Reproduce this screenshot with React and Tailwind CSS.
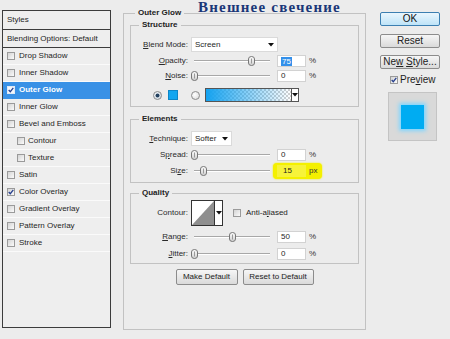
import React from 'react';

const sans = "font-['Liberation_Sans',Arial,sans-serif]";

const items = [
    { label: 'Drop Shadow' },
    { label: 'Inner Shadow' },
    { label: 'Outer Glow', checked: true, selected: true },
    { label: 'Inner Glow' },
    { label: 'Bevel and Emboss' },
    { label: 'Contour', indent: true },
    { label: 'Texture', indent: true },
    { label: 'Satin' },
    { label: 'Color Overlay', checked: true },
    { label: 'Gradient Overlay' },
    { label: 'Pattern Overlay' },
    { label: 'Stroke' },
];

const Check = ({ checked, light }) => (
    <span
        className={`w-[8px] h-[8px] shrink-0 border flex items-center justify-center ${
            light ? 'border-[#dfe9f5] bg-[#f4f7fb]' : 'border-[#9a9a9a] bg-linear-to-br from-[#d4d4d4] to-[#fbfbfb]'
        }`}
    >
        {checked && (
            <svg width="6" height="6" viewBox="0 0 6 6">
                <path d="M0.7 3 L2.3 4.7 L5.3 0.9" fill="none" stroke="#263f8e" strokeWidth="1.3" />
            </svg>
        )}
    </span>
);

const Arrow = () => (
    <svg width="6" height="4" viewBox="0 0 6 4">
        <path d="M0 0 H6 L3 3.5 Z" fill="#111" />
    </svg>
);

const Slider = ({ pos }) => (
    <div className="relative w-[82px] h-[12px] flex items-center px-[3px] shrink-0">
        <div className="w-full h-[2px] border-t border-[#a8a8a8] border-b border-b-white" />
        <svg className="absolute top-[1px]" style={{ left: `${pos}px` }} width="7" height="10" viewBox="0 0 7 10">
            <defs>
                <linearGradient id="th" x1="0" y1="0" x2="0" y2="1">
                    <stop offset="0" stopColor="#ffffff" />
                    <stop offset="1" stopColor="#cfcfcf" />
                </linearGradient>
            </defs>
            <path d="M0.5 3 Q0.5 0.5 3.5 0.5 Q6.5 0.5 6.5 3 V7 Q6.5 9.5 3.5 9.5 Q0.5 9.5 0.5 7 Z" fill="url(#th)" stroke="#777" />
            <line x1="3.5" y1="2.5" x2="3.5" y2="7.5" stroke="#9a9a9a" />
        </svg>
    </div>
);

const Label = ({ children }) => (
    <span className="w-[60px] pr-[3px] text-right shrink-0 text-[#2a2a2a]">{children}</span>
);

const Field = ({ value, selected }) => (
    <span className="w-[29px] h-[12px] bg-white border border-[#d2d2d2] flex items-center pl-[3px] shrink-0">
        {selected ? <span className="bg-[#3390ea] text-white px-[1px] leading-[9px]">{value}</span> : value}
    </span>
);

const SliderRow = ({ label, pos, value, unit = '%', selected, className = '' }) => (
    <div className={`flex items-center h-[12px] ${className}`}>
        <Label>{label}</Label>
        <Slider pos={pos} />
        <span className="ml-[4px]">
            <Field value={value} selected={selected} />
        </span>
        <span className="ml-[3px] text-[#333]">{unit}</span>
    </div>
);

const Radio = ({ on }) => (
    <svg width="9" height="9" viewBox="0 0 9 9" className="shrink-0">
        <defs>
            <radialGradient id={on ? 'ron' : 'roff'} cx="0.4" cy="0.4" r="0.7">
                <stop offset="0" stopColor="#ffffff" />
                <stop offset="1" stopColor={on ? '#c7d3df' : '#dadada'} />
            </radialGradient>
        </defs>
        <circle cx="4.5" cy="4.5" r="4" fill={`url(#${on ? 'ron' : 'roff'})`} stroke="#8c8c8c" />
        {on && <circle cx="4.5" cy="4.5" r="2" fill="#23415f" />}
    </svg>
);

const Group = ({ title, className = '', legendClass = 'ml-[8px]', children }) => (
    <fieldset className={`border border-[#c2c2c2] ${className}`}>
        <legend className={`${legendClass} px-[3px] font-bold text-[8px] leading-[12px] text-[#222]`}>{title}</legend>
        {children}
    </fieldset>
);

const Btn = ({ children, className = '' }) => (
    <div
        className={`flex items-center justify-center border border-[#8c8c8c] rounded-[2px] bg-linear-to-b from-[#f6f6f6] to-[#dadada] text-[#222] ${className}`}
    >
        {children}
    </div>
);

export default function App() {
    return (
        <div className={`relative w-[450px] h-[339px] bg-[#ececec] flex items-start text-[8px] leading-none text-[#1e1e1e] ${sans}`}>
            {/* style list */}
            <div className="ml-[2px] mt-[10px] w-[109px] h-[318px] border border-[#3c3c3c] bg-[#eeeeee] flex flex-col">
                <div className="h-[19px] border-b border-[#3c3c3c] flex items-center pl-[4px]">Styles</div>
                <div className="h-[18px] border-b border-[#3c3c3c] flex items-center pl-[4px]">Blending Options: Default</div>
                {items.map((it) => (
                    <div
                        key={it.label}
                        className={`h-[17px] flex items-center border-b ${it.indent ? 'pl-[14px]' : 'pl-[4px]'} ${
                            it.selected ? 'bg-[#3991e6] border-[#3991e6] text-white font-bold' : 'border-[#fafafa]'
                        }`}
                    >
                        <Check checked={it.checked} light={it.selected} />
                        <span className={it.indent ? 'ml-[3px]' : 'ml-[4px]'}>{it.label}</span>
                    </div>
                ))}
            </div>

            {/* Outer Glow settings */}
            <fieldset className="ml-[12px] mt-[7px] w-[243px] h-[323px] border border-[#c2c2c2] px-[6px]">
                <legend className="ml-[5px] px-[3px] font-bold text-[8px] leading-[12px] text-[#222]">Outer Glow</legend>

                <Group title="Structure" className="h-[88px]">
                    <div className="flex items-center h-[15px] mt-[6px]">
                        <Label>
                            <u>B</u>lend Mode:
                        </Label>
                        <div className="w-[87px] h-[15px] bg-white border border-[#dadada] flex items-center justify-between pl-[3px] pr-[3px]">
                            <span>Screen</span>
                            <Arrow />
                        </div>
                    </div>
                    <SliderRow
                        className="mt-[3px]"
                        label={
                            <>
                                <u>O</u>pacity:
                            </>
                        }
                        pos={57}
                        value="75"
                        selected
                    />
                    <SliderRow
                        className="mt-[3px]"
                        label={
                            <>
                                <u>N</u>oise:
                            </>
                        }
                        pos={0}
                        value="0"
                    />
                    <div className="flex items-center h-[14px] mt-[6px] pl-[22px]">
                        <Radio on />
                        <span className="ml-[6px] w-[10px] h-[10px] bg-[#12a6f0] border border-[#0c86c8]" />
                        <span className="ml-[13px]">
                            <Radio />
                        </span>
                        <div className="ml-[5px] w-[94px] h-[14px] border border-[#555] flex">
                            <div className="flex-1 bg-[repeating-conic-gradient(#d0d0d0_0%_25%,#ffffff_0%_50%)] bg-[length:4px_4px]">
                                <div className="w-full h-full bg-linear-to-r from-[#14a2f0] to-transparent" />
                            </div>
                            <div className="w-[7px] bg-white border-l border-[#555] flex items-center justify-center">
                                <Arrow />
                            </div>
                        </div>
                    </div>
                </Group>

                <Group title="Elements" className="mt-[6px] h-[70px]">
                    <div className="flex items-center h-[15px] mt-[6px]">
                        <Label>
                            <u>T</u>echnique:
                        </Label>
                        <div className="w-[41px] h-[15px] bg-white border border-[#dadada] flex items-center justify-between pl-[3px] pr-[3px]">
                            <span>Softer</span>
                            <Arrow />
                        </div>
                    </div>
                    <SliderRow
                        className="mt-[3px]"
                        label={
                            <>
                                S<u>p</u>read:
                            </>
                        }
                        pos={0}
                        value="0"
                    />
                    <div className="flex items-center mt-[2px]">
                        <Label>
                            Si<u>z</u>e:
                        </Label>
                        <Slider pos={9} />
                        <div className="w-[49px] h-[16px] rounded-[4px] bg-[#f4f000] shadow-[0_0_2px_#f4f000] flex items-center pl-[4px]">
                            <span className="w-[29px] h-[12px] bg-[#f7f33a] flex items-center pl-[6px]">15</span>
                            <span className="ml-[3px] text-[#333]">px</span>
                        </div>
                    </div>
                </Group>

                <Group title="Quality" className="mt-[4px] h-[77px]">
                    <div className="flex items-center mt-[1px]">
                        <Label>Contour:</Label>
                        <div className="w-[32px] h-[26px] border border-[#333] flex bg-white">
                            <svg width="22" height="24" viewBox="0 0 22 24" className="shrink-0">
                                <path d="M0 24 L22 0 V24 Z" fill="#8f8f8f" />
                            </svg>
                            <div className="flex-1 border-l border-[#333] flex items-center justify-center">
                                <Arrow />
                            </div>
                        </div>
                        <span className="ml-[10px]">
                            <Check />
                        </span>
                        <span className="ml-[5px]">
                            Anti-a<u>l</u>iased
                        </span>
                    </div>
                    <SliderRow
                        className="mt-[5px]"
                        label={
                            <>
                                <u>R</u>ange:
                            </>
                        }
                        pos={38}
                        value="50"
                    />
                    <SliderRow
                        className="mt-[5px]"
                        label={
                            <>
                                <u>J</u>itter:
                            </>
                        }
                        pos={0}
                        value="0"
                    />
                </Group>

                <div className="flex justify-center gap-[5px] mt-[5px]">
                    <Btn className="w-[62px] h-[16px]">Make Default</Btn>
                    <Btn className="w-[71px] h-[16px]">Reset to Default</Btn>
                </div>
            </fieldset>

            {/* buttons & preview */}
            <div className="ml-[14px] mt-[12px] w-[60px] flex flex-col text-[10px]">
                <div className="h-[14px] flex items-center justify-center border border-[#3c7fb1] rounded-[2px] bg-linear-to-b from-[#eaf6fd] to-[#bee4f8] text-[#111]">
                    OK
                </div>
                <Btn className="h-[14px] mt-[8px]">Reset</Btn>
                <Btn className="h-[14px] mt-[7px]">
                    Ne<u>w</u>&nbsp;<u>S</u>tyle...
                </Btn>
                <div className="flex items-center h-[10px] mt-[6px] pl-[10px]">
                    <Check checked />
                    <span className="ml-[2px]">
                        Pre<u>v</u>iew
                    </span>
                </div>
                <div className="mt-[7px] ml-[8px] w-[49px] h-[49px] bg-[#d9d9d9] border border-[#c4c4c4] flex items-center justify-center">
                    <div className="w-[23px] h-[24px] bg-[#00acf2] shadow-[0_0_4px_2px_#7fd6ff]" />
                </div>
            </div>

            <div className="absolute left-[198px] top-0 font-['Liberation_Serif',serif] font-bold text-[15px] leading-[14px] tracking-[1.2px] text-[#1a3778]">
                Внешнее свечение
            </div>
        </div>
    );
}
